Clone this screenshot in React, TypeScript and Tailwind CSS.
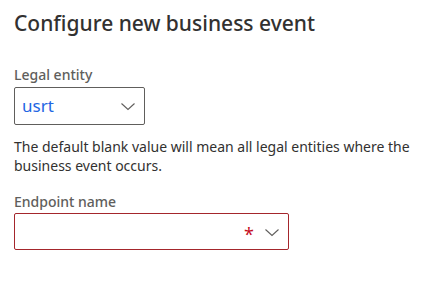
function Chevron() {
  return (
    <svg width="16" height="16" viewBox="0 0 16 16" fill="none">
      <path d="M1.5 5.5 L8 11.5 L14.5 5.5" stroke="#605e5c" strokeWidth="1.1" />
    </svg>
  )
}

export default function App() {
  return (
    <div className="w-[426px] h-[297px] bg-white px-[14px] pt-[9px] text-[#323130]" style={{ fontFamily: '"Noto Sans", "Open Sans", sans-serif' }}>
      <h1 className="text-[21px] leading-[28px] font-medium">Configure new business event</h1>

      <div className="mt-[28px]">
        <label className="block text-[14px] leading-[20px] font-medium text-[#605e5c]">Legal entity</label>
        <div className="mt-[2px] w-[131px] h-[38px] border border-[#605e5c] rounded-[2px] flex items-center pl-[7px] pr-[8px]">
          <span className="flex-1 text-[17px] text-[#2266e3]">usrt</span>
          <Chevron />
        </div>
      </div>

      <p className="mt-[12px] text-[14px] leading-[19px] pr-[2px]">
        The default blank value will mean all legal entities where the business event occurs.
      </p>

      <div className="mt-[17px]">
        <label className="block text-[14px] leading-[20px] font-medium text-[#605e5c]">Endpoint name</label>
        <div className="mt-[1px] w-[275px] h-[37px] border border-[#a4262c] rounded-[2px] flex items-center justify-end pr-[8px] gap-[10px]">
          <span className="text-[#c50f1f] text-[18px] leading-none mt-[5px]">*</span>
          <Chevron />
        </div>
      </div>
    </div>
  )
}
